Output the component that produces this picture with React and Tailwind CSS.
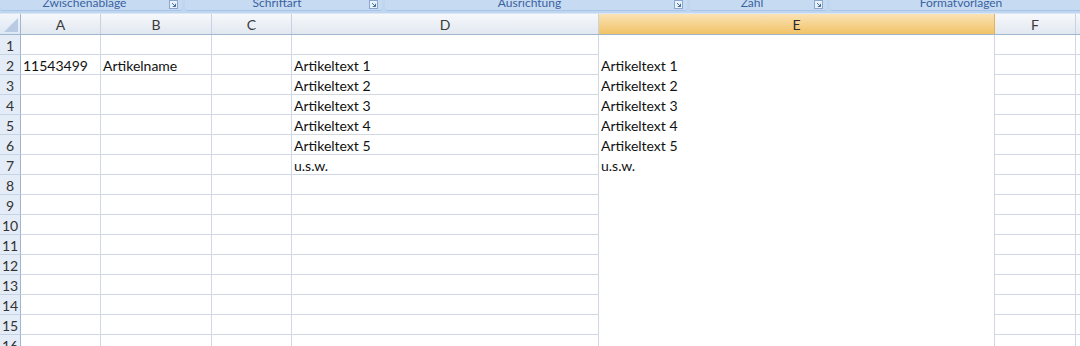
import React from "react";

const COLS = [
  { key: "A", w: 80 },
  { key: "B", w: 111 },
  { key: "C", w: 80 },
  { key: "D", w: 307 },
  { key: "E", w: 396 },
  { key: "F", w: 81 },
  { key: "G", w: 80 },
];

const GROUPS = [
  { label: "Zwischenablage", w: 182, launcher: true },
  { label: "Schriftart", w: 197, launcher: true },
  { label: "Ausrichtung", w: 302, launcher: true },
  { label: "Zahl", w: 137, launcher: true },
  { label: "Formatvorlagen", w: 262, launcher: false },
];

const DATA = {
  2: { A: "11543499", B: "Artikelname", D: "Artikeltext 1", E: "Artikeltext 1" },
  3: { D: "Artikeltext 2", E: "Artikeltext 2" },
  4: { D: "Artikeltext 3", E: "Artikeltext 3" },
  5: { D: "Artikeltext 4", E: "Artikeltext 4" },
  6: { D: "Artikeltext 5", E: "Artikeltext 5" },
  7: { D: "u.s.w.", E: "u.s.w." },
};

const rows = Array.from({ length: 16 }, (_, i) => i + 1);

function Launcher() {
  return (
    <svg width="9" height="9" viewBox="0 0 9 9" className="shrink-0">
      <rect x="0.5" y="0.5" width="8" height="8" fill="#e9f1fb" stroke="#8aa8cf" />
      <path d="M3 3 L6.5 6.5 M6.5 3.8 V6.5 H3.8" stroke="#4a6f9f" strokeWidth="1" fill="none" />
    </svg>
  );
}

export default function App() {
  return (
    <div
      className="w-[1080px] h-[346px] overflow-hidden bg-white"
      style={{ fontFamily: 'Lato, "Liberation Sans", Arial, sans-serif' }}
    >
      {/* Ribbon group labels */}
      <div className="flex h-[14px] bg-[#bfd6f0] border-b border-[#dbe7f5]">
        {GROUPS.map((g, i) => (
          <div
            key={g.label}
            style={{ width: g.w }}
            className={`relative flex h-[11px] shrink-0 items-end rounded-b-[3px] bg-[#c6dbf2] border-b border-[#a9c4e6] ${
              i === 0 ? "" : "ml-[3px]"
            }`}
          >
            <span className="flex-1 text-center text-[12px] leading-[12px] text-[#3a62a0] -translate-y-[1px]">
              {g.label}
            </span>
            {g.launcher && (
              <div className="mr-[4px] mb-[1px]">
                <Launcher />
              </div>
            )}
          </div>
        ))}
      </div>

      {/* Column headers */}
      <div className="flex h-[21px] border-b border-[#9eb6ce]">
        <div className="relative w-[21px] shrink-0 bg-gradient-to-b from-[#f3f6fb] to-[#dde7f4] border-r border-[#9eb6ce]">
          <svg width="14" height="14" viewBox="0 0 14 14" className="absolute right-[2px] bottom-[2px]">
            <polygon points="14,0 14,14 0,14" fill="#b8cbe3" />
          </svg>
        </div>
        {COLS.map((c) => (
          <div
            key={c.key}
            style={{ width: c.w }}
            className={`flex shrink-0 items-center justify-center border-r text-[14px] pt-[1px] ${
              c.key === "E"
                ? "bg-gradient-to-b from-[#fae2b4] to-[#f2c366] border-[#e1b45a] text-[#2b2b2b]"
                : "bg-gradient-to-b from-[#f6f8fb] to-[#e2e8f1] border-[#c6d2e0] text-[#3b3b3b]"
            }`}
          >
            {c.key}
          </div>
        ))}
      </div>

      {/* Grid rows */}
      {rows.map((r) => (
        <div key={r} className="flex h-[20px]">
          <div className="flex w-[21px] shrink-0 items-center justify-center pt-[1px] bg-[#e4ecf7] border-r border-b border-r-[#9eb6ce] border-b-[#c5d3e4] text-[14px] text-[#333]">
            {r}
          </div>
          {COLS.map((c) => (
            <div
              key={c.key}
              style={{ width: c.w }}
              className={`flex shrink-0 items-center overflow-hidden whitespace-nowrap pl-[2px] pt-[1px] border-r border-[#d0d7e5] text-[14px] text-[#111] ${
                c.key === "E" ? "" : "border-b"
              }`}
            >
              {DATA[r]?.[c.key] || ""}
            </div>
          ))}
        </div>
      ))}
    </div>
  );
}
